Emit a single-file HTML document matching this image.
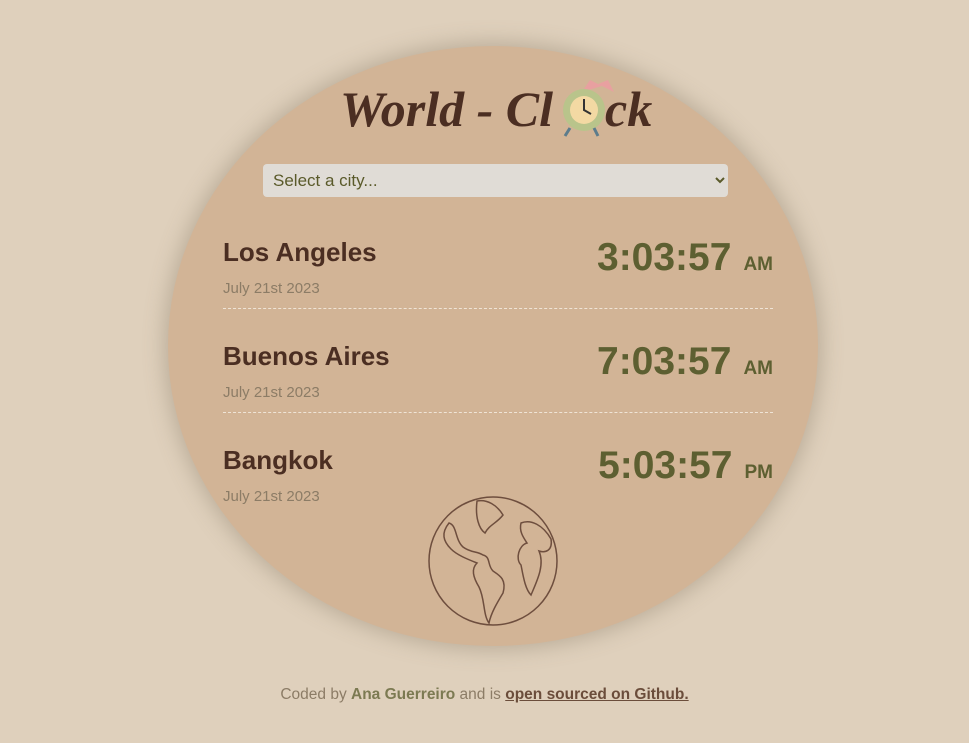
<!DOCTYPE html>
<html><head><style>
body{margin:0;width:969px;height:743px;background:#dfd0bc;font-family:"Liberation Sans",sans-serif;position:relative;overflow:hidden}
.oval{position:absolute;left:168px;top:46px;width:650px;height:600px;border-radius:50%;background:#d2b496;box-shadow:0 0 20px 4px rgba(120,110,90,.35)}
.title{position:absolute;left:340px;top:80px;font-family:"Liberation Serif",serif;font-style:italic;font-weight:bold;font-size:50px;color:#4b2e22;letter-spacing:0px;white-space:nowrap}
select{position:absolute;left:263px;top:164px;width:465px;height:33px;background:#e0dcd6;border:none;border-radius:4px;font-size:17px;color:#5a5a2a;padding-left:6px;font-family:"Liberation Sans",sans-serif}
.row{position:absolute;left:223px;width:550px;height:84px;border-bottom:1px dashed #efe4d6}
.city{position:absolute;left:0;top:13px;font-size:26px;font-weight:bold;color:#4b2e22}
.date{position:absolute;left:0;top:56px;font-size:15px;color:#8c7c66}
.time{position:absolute;right:0;top:12px;font-size:39px;font-weight:bold;color:#5d5f31;white-space:nowrap}
.time small{font-size:19px;margin-left:12px}
.foot{position:absolute;top:686px;width:100%;text-align:center;font-size:15.5px;color:#8c7c66}
.foot b{color:#7c7a52}
.foot u{color:#6b4d3b;font-weight:bold}
</style></head><body>
<div class="oval"></div>
<div class="title">World - Cl<span style="display:inline-block;width:52px"></span>ck</div>
<svg style="position:absolute;left:558px;top:78px" width="72" height="62" viewBox="0 0 72 62">
<path d="M24 14 L32 2 L44 8 Z" fill="#e8a0a0"/><path d="M40 6 L50 2 L56 14Z" fill="#e8a0a0"/>
<circle cx="26" cy="32" r="21" fill="#b9c48b"/><circle cx="26" cy="32" r="14" fill="#f3d9a3"/>
<path d="M26 21v11l7 4" stroke="#333" stroke-width="2" fill="none"/>
<path d="M12 50l-5 8M36 50l4 8" stroke="#5c7c8c" stroke-width="3"/>
</svg>
<select><option>Select a city...</option></select>
<div class="row" style="top:224px"><div class="city">Los Angeles</div><div class="date">July 21st 2023</div><div class="time">3:03:57<small>AM</small></div></div>
<div class="row" style="top:328px"><div class="city">Buenos Aires</div><div class="date">July 21st 2023</div><div class="time">7:03:57<small>AM</small></div></div>
<div class="row" style="top:432px;border:none"><div class="city">Bangkok</div><div class="date">July 21st 2023</div><div class="time">5:03:57<small>PM</small></div></div>
<svg style="position:absolute;left:427px;top:495px" width="132" height="132" viewBox="0 0 132 132" fill="none" stroke="#6e4e3e" stroke-width="1.5">
<circle cx="66" cy="66" r="64"/>
<path d="M22 28 C30 30 28 45 36 52 C44 58 50 56 56 60 C64 62 60 70 66 76 C72 80 80 84 76 98 C70 108 64 118 62 128 C56 120 58 104 52 92 C46 82 44 74 50 68 C40 64 30 60 24 54 C16 46 14 38 22 28Z"/>
<path d="M50 6 C60 4 70 10 76 20 C70 28 62 30 58 38 C52 34 48 22 50 6Z"/>
<path d="M94 28 C104 24 116 30 124 44 C126 56 118 58 112 56 C118 70 110 86 104 100 C98 94 96 80 94 70 C88 64 92 50 100 48 C96 42 92 36 94 28Z"/>
</svg>
<div class="foot">Coded by <b>Ana Guerreiro</b> and is <u>open sourced on Github.</u></div>
</body></html>
